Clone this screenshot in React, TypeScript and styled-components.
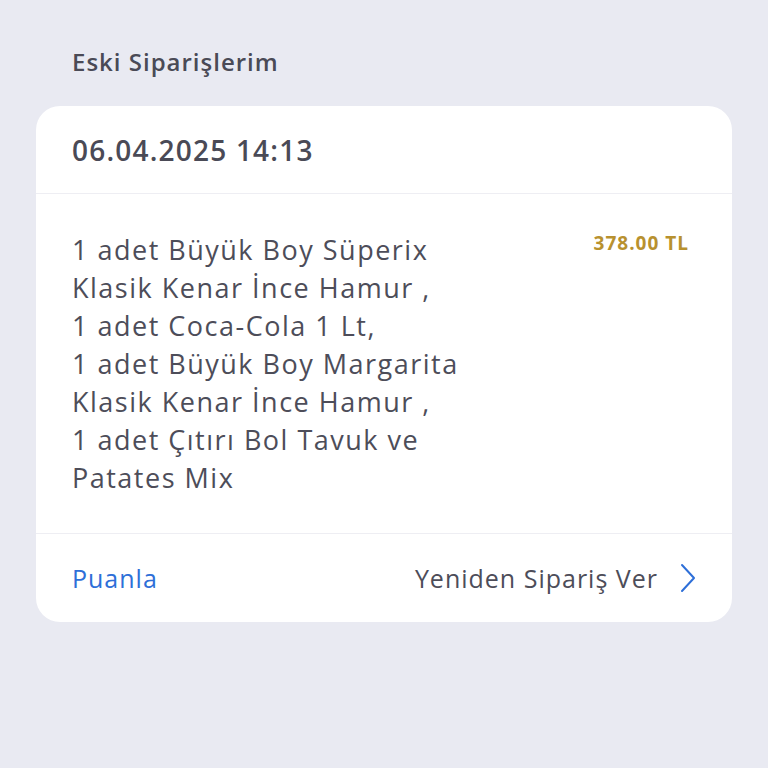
import styled, { createGlobalStyle } from "styled-components";

const GlobalStyle = createGlobalStyle`
  body {
    margin: 0;
    background: #e9eaf2;
    font-family: "Open Sans", Lato, sans-serif;
  }
`;

const lines = [
  "1 adet Büyük Boy Süperix",
  "Klasik Kenar İnce Hamur ,",
  "1 adet Coca-Cola 1 Lt,",
  "1 adet Büyük Boy Margarita",
  "Klasik Kenar İnce Hamur ,",
  "1 adet Çıtırı Bol Tavuk ve",
  "Patates Mix",
];

function App(): JSX.Element {
  return (
    <Page>
      <GlobalStyle />
      <Title>Eski Siparişlerim</Title>
      <Card>
        <Header>06.04.2025 14:13</Header>
        <Body>
          <Items>
            {lines.map((line, i) => (
              <span key={i}>{line}</span>
            ))}
          </Items>
          <Price>378.00 TL</Price>
        </Body>
        <Footer>
          <RateLink>Puanla</RateLink>
          <Reorder>
            Yeniden Sipariş Ver
            <svg width="16" height="30" viewBox="0 0 16 30" fill="none">
              <path
                d="M2 2 L14 15 L2 28"
                stroke="#2e6fd8"
                strokeWidth="2"
                strokeLinecap="round"
                strokeLinejoin="round"
              />
            </svg>
          </Reorder>
        </Footer>
      </Card>
    </Page>
  );
}

export default App;

const Page = styled.div`
  padding: 48px 36px 0;
  min-height: 768px;
  box-sizing: border-box;
`;

const Title = styled.h2`
  margin: 0 0 30px 36px;
  font-size: 24px;
  line-height: 28px;
  font-weight: 600;
  letter-spacing: 1px;
  color: #4a4a56;
`;

const Card = styled.div`
  background: #fff;
  border-radius: 24px;
  overflow: hidden;
`;

const Header = styled.div`
  height: 87px;
  display: flex;
  align-items: center;
  padding: 0 36px;
  font-size: 28px;
  font-weight: 600;
  letter-spacing: 1.2px;
  color: #4a4a56;
  border-bottom: 1px solid #eeeef3;
`;

const Body = styled.div`
  display: flex;
  justify-content: space-between;
  align-items: flex-start;
  padding: 37px 43px 36px 36px;
  border-bottom: 1px solid #eeeef3;
`;

const Items = styled.div`
  font-size: 27px;
  line-height: 38px;
  letter-spacing: 1.5px;
  color: #4d4d59;

  span {
    display: block;
    white-space: nowrap;
  }
`;

const Price = styled.div`
  margin-top: 0;
  font-size: 19px;
  line-height: 24px;
  font-weight: 700;
  letter-spacing: 1px;
  color: #b8912f;
`;

const Footer = styled.div`
  height: 88px;
  display: flex;
  align-items: center;
  justify-content: space-between;
  padding: 0 36px 0 36px;
  font-size: 25px;
  letter-spacing: 1px;
`;

const RateLink = styled.span`
  color: #2e6fd8;
`;

const Reorder = styled.span`
  display: flex;
  align-items: center;
  gap: 22px;
  color: #4d4d59;
`;
